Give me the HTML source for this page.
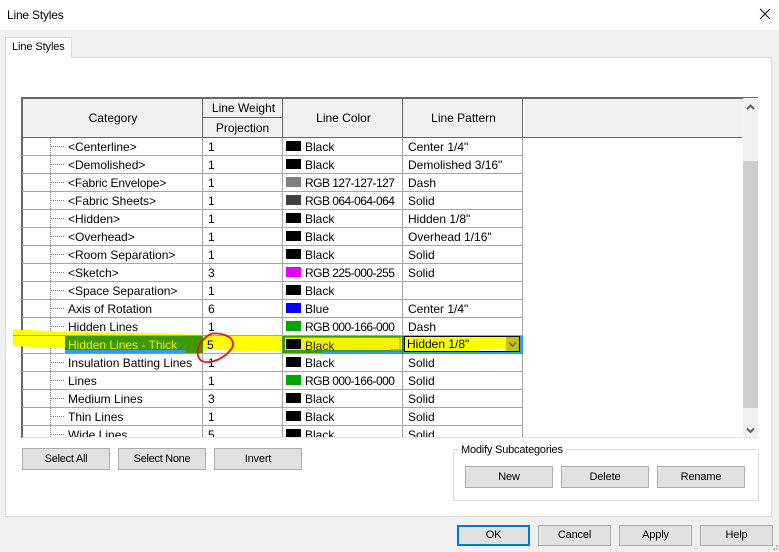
<!DOCTYPE html>
<html><head><meta charset="utf-8"><style>
html,body{margin:0;padding:0}
body{width:779px;height:552px;overflow:hidden;background:#f0f0f0;position:relative;font-family:"Liberation Sans",sans-serif;font-size:12px;color:#000}
div{position:absolute;box-sizing:border-box}
.t{white-space:nowrap;line-height:16px;height:16px}
.c{text-align:center}
.r{letter-spacing:-.53px}
.b{background:#e1e1e1;border:1px solid #adadad;text-align:center;line-height:20px;font-size:11px;letter-spacing:-.15px}
.h{background:#a6a6a6}
.d{background:#686868}
.s{width:15px;height:10px;left:286px}
</style></head><body>
<div style="left:0;top:0;width:779px;height:30px;background:#fff"></div>
<div class="t" style="left:7px;top:7px;font-size:12px;letter-spacing:-.2px">Line Styles</div>
<svg style="position:absolute;left:759px;top:8px" width="20" height="20"><path d="M1 1L11 11M11 1L1 11" stroke="#111" stroke-width="1" fill="none"/></svg>

<div style="left:5px;top:57px;width:767px;height:460px;background:#fff;border:1px solid #d9d9d9"></div>
<div style="left:5px;top:37px;width:67px;height:21px;background:#fff;border:1px solid #d9d9d9;border-bottom:0"></div>
<div class="t" style="left:12px;top:39px;font-size:11px;letter-spacing:-.1px">Line Styles</div>

<!-- table -->
<div style="left:22px;top:98px;width:721px;height:39px;background:#f0f0f0;border:1px solid #fff;border-bottom:0"></div>
<div style="left:523px;top:137px;width:220px;height:300px;background:#fff"></div>
<div class="d" style="left:21px;top:97px;width:737px;height:1.5px"></div>
<div class="d" style="left:21px;top:97px;width:1.5px;height:341px"></div>
<div class="d" style="left:22px;top:137px;width:720px;height:1px"></div>
<div class="d" style="left:202px;top:98px;width:1px;height:39px"></div>
<div class="d" style="left:282px;top:98px;width:1px;height:39px"></div>
<div class="d" style="left:402px;top:98px;width:1px;height:39px"></div>
<div class="d" style="left:522px;top:98px;width:1px;height:39px"></div>
<div style="left:523px;top:99px;width:1px;height:38px;background:#fff"></div>
<div class="d" style="left:203px;top:117px;width:79px;height:1px"></div>
<div style="left:22px;top:437px;width:736px;height:1px;background:#e3e3e3"></div>

<div class="t c" style="left:23px;top:110px;width:180px">Category</div>
<div class="t c" style="left:204px;top:100px;width:79px">Line Weight</div>
<div class="t c" style="left:203px;top:120px;width:79px">Projection</div>
<div class="t c" style="left:284px;top:110px;width:119px">Line Color</div>
<div class="t c" style="left:404px;top:110px;width:119px">Line Pattern</div>

<!-- grid -->
<div class="h" style="left:202px;top:138px;width:1px;height:299px"></div>
<div class="h" style="left:282px;top:138px;width:1px;height:299px"></div>
<div class="h" style="left:402px;top:138px;width:1px;height:299px"></div>
<div class="h" style="left:522px;top:138px;width:1px;height:299px"></div>
<div class="h" style="left:22px;top:155px;width:501px;height:1px"></div>
<div class="h" style="left:22px;top:173px;width:501px;height:1px"></div>
<div class="h" style="left:22px;top:191px;width:501px;height:1px"></div>
<div class="h" style="left:22px;top:209px;width:501px;height:1px"></div>
<div class="h" style="left:22px;top:227px;width:501px;height:1px"></div>
<div class="h" style="left:22px;top:245px;width:501px;height:1px"></div>
<div class="h" style="left:22px;top:263px;width:501px;height:1px"></div>
<div class="h" style="left:22px;top:281px;width:501px;height:1px"></div>
<div class="h" style="left:22px;top:299px;width:501px;height:1px"></div>
<div class="h" style="left:22px;top:317px;width:501px;height:1px"></div>
<div class="h" style="left:22px;top:335px;width:501px;height:1px"></div>
<div class="h" style="left:22px;top:353px;width:501px;height:1px"></div>
<div class="h" style="left:22px;top:371px;width:501px;height:1px"></div>
<div class="h" style="left:22px;top:389px;width:501px;height:1px"></div>
<div class="h" style="left:22px;top:407px;width:501px;height:1px"></div>
<div class="h" style="left:22px;top:425px;width:501px;height:1px"></div>

<!-- tree lines -->
<div style="left:50px;top:138px;width:0;height:299px;border-left:1px dotted #808080"></div>
<svg style="position:absolute;left:51px;top:138px" width="15" height="299"><path d="M0 8.500H14M0 26.500H14M0 44.500H14M0 62.500H14M0 80.500H14M0 98.500H14M0 116.500H14M0 134.500H14M0 152.500H14M0 170.500H14M0 188.500H14M0 206.500H14M0 224.500H14M0 242.500H14M0 260.500H14M0 278.500H14M0 296.500H14" stroke="#808080" stroke-dasharray="1 1" fill="none"/></svg>

<!-- rows: category -->
<div class="t" style="left:68px;top:139px">&lt;Centerline&gt;</div>
<div class="t" style="left:68px;top:157px">&lt;Demolished&gt;</div>
<div class="t" style="left:68px;top:175px;letter-spacing:-.15px">&lt;Fabric Envelope&gt;</div>
<div class="t" style="left:68px;top:193px">&lt;Fabric Sheets&gt;</div>
<div class="t" style="left:68px;top:211px">&lt;Hidden&gt;</div>
<div class="t" style="left:68px;top:229px">&lt;Overhead&gt;</div>
<div class="t" style="left:68px;top:247px">&lt;Room Separation&gt;</div>
<div class="t" style="left:68px;top:265px">&lt;Sketch&gt;</div>
<div class="t" style="left:68px;top:283px">&lt;Space Separation&gt;</div>
<div class="t" style="left:68px;top:301px">Axis of Rotation</div>
<div class="t" style="left:68px;top:319px">Hidden Lines</div>
<div class="t" style="left:68px;top:355px">Insulation Batting Lines</div>
<div class="t" style="left:68px;top:373px">Lines</div>
<div class="t" style="left:68px;top:391px">Medium Lines</div>
<div class="t" style="left:68px;top:409px">Thin Lines</div>
<div class="t" style="left:68px;top:427px;height:10px;overflow:hidden">Wide Lines</div>

<!-- rows: weight -->
<div class="t" style="left:208px;top:139px">1</div>
<div class="t" style="left:208px;top:157px">1</div>
<div class="t" style="left:208px;top:175px">1</div>
<div class="t" style="left:208px;top:193px">1</div>
<div class="t" style="left:208px;top:211px">1</div>
<div class="t" style="left:208px;top:229px">1</div>
<div class="t" style="left:208px;top:247px">1</div>
<div class="t" style="left:208px;top:265px">3</div>
<div class="t" style="left:208px;top:283px">1</div>
<div class="t" style="left:208px;top:301px">6</div>
<div class="t" style="left:208px;top:319px">1</div>
<div class="t" style="left:208px;top:355px">1</div>
<div class="t" style="left:208px;top:373px">1</div>
<div class="t" style="left:208px;top:391px">3</div>
<div class="t" style="left:208px;top:409px">1</div>
<div class="t" style="left:208px;top:427px;height:10px;overflow:hidden">5</div>

<!-- rows: color -->
<div class="s" style="top:141px;background:#000"></div><div class="t" style="left:305px;top:139px">Black</div>
<div class="s" style="top:159px;background:#000"></div><div class="t" style="left:305px;top:157px">Black</div>
<div class="s" style="top:177px;background:#7f7f7f"></div><div class="t r" style="left:305px;top:175px">RGB 127-127-127</div>
<div class="s" style="top:195px;background:#404040"></div><div class="t r" style="left:305px;top:193px">RGB 064-064-064</div>
<div class="s" style="top:213px;background:#000"></div><div class="t" style="left:305px;top:211px">Black</div>
<div class="s" style="top:231px;background:#000"></div><div class="t" style="left:305px;top:229px">Black</div>
<div class="s" style="top:249px;background:#000"></div><div class="t" style="left:305px;top:247px">Black</div>
<div class="s" style="top:267px;background:#e100ff"></div><div class="t r" style="left:305px;top:265px">RGB 225-000-255</div>
<div class="s" style="top:285px;background:#000"></div><div class="t" style="left:305px;top:283px">Black</div>
<div class="s" style="top:303px;background:#0000ff"></div><div class="t" style="left:305px;top:301px">Blue</div>
<div class="s" style="top:321px;background:#00a600"></div><div class="t r" style="left:305px;top:319px">RGB 000-166-000</div>
<div class="s" style="top:357px;background:#000"></div><div class="t" style="left:305px;top:355px">Black</div>
<div class="s" style="top:375px;background:#00a600"></div><div class="t r" style="left:305px;top:373px">RGB 000-166-000</div>
<div class="s" style="top:393px;background:#000"></div><div class="t" style="left:305px;top:391px">Black</div>
<div class="s" style="top:411px;background:#000"></div><div class="t" style="left:305px;top:409px">Black</div>
<div class="s" style="top:429px;height:8px;background:#000"></div><div class="t" style="left:305px;top:427px;height:10px;overflow:hidden">Black</div>

<!-- rows: pattern -->
<div class="t" style="left:408px;top:139px">Center 1/4"</div>
<div class="t" style="left:408px;top:157px">Demolished 3/16"</div>
<div class="t" style="left:408px;top:175px">Dash</div>
<div class="t" style="left:408px;top:193px">Solid</div>
<div class="t" style="left:408px;top:211px">Hidden 1/8"</div>
<div class="t" style="left:408px;top:229px">Overhead 1/16"</div>
<div class="t" style="left:408px;top:247px">Solid</div>
<div class="t" style="left:408px;top:265px">Solid</div>
<div class="t" style="left:408px;top:301px">Center 1/4"</div>
<div class="t" style="left:408px;top:319px">Dash</div>
<div class="t" style="left:408px;top:355px">Solid</div>
<div class="t" style="left:408px;top:373px">Solid</div>
<div class="t" style="left:408px;top:391px">Solid</div>
<div class="t" style="left:408px;top:409px">Solid</div>
<div class="t" style="left:408px;top:427px;height:10px;overflow:hidden">Solid</div>

<!-- highlighted row -->
<svg style="position:absolute;left:0;top:0" width="779" height="552">
<path d="M13 330H28L65 332L150 333L205 335H65V348L32 347L13 346Z" fill="#ffff00"/>
<path d="M13 335.500H65" stroke="#b0b000"/>
<rect x="65" y="336" width="138" height="17" fill="#3d9900"/>
<rect x="65" y="350" width="121" height="3.500" fill="#3399ff"/>
<rect x="203" y="336" width="80" height="17" fill="#fff"/>
<path d="M203 336H283V351L240 352L228 351V350H203Z" fill="#ffff00"/>
<rect x="282" y="336" width="240" height="17" fill="#3d9900"/>
<rect x="285" y="337" width="117" height="13" fill="#f3f300"/>
<path d="M285 337.500H400M400 337V350" stroke="#a8a800" fill="none"/>
<rect x="390" y="349" width="12" height="1.500" fill="#aaa"/>
<rect x="282" y="350" width="40" height="3" fill="#3d9900"/>
<rect x="322" y="351.500" width="201" height="2.500" fill="#3399ff"/>
<rect x="404.500" y="336.500" width="115" height="15" fill="#ffff00" stroke="#000"/>
<rect x="480" y="349" width="25" height="2" fill="#fff"/>
<rect x="506" y="337" width="13" height="14" fill="#c4c400"/>
<path d="M509 342.500L512.500 346L516 342.500" stroke="#444" fill="none"/>
<rect x="520" y="336" width="3" height="18" fill="#3399ff"/>
<rect x="402" y="336" width="1" height="18" fill="#2d7a00"/>
<rect x="286" y="339" width="15" height="10" fill="#000"/>
</svg>
<div class="t" style="left:68px;top:337px;color:#e6f000">Hidden Lines - Thick</div>
<div class="t" style="left:207px;top:337px">5</div>
<div class="t" style="left:305px;top:338px;color:#222">Black</div>
<div class="t" style="left:407px;top:336px">Hidden 1/8"</div>
<svg style="position:absolute;left:0;top:0" width="779" height="552"><path d="M212 333.500C218 333 224 334 229 337C233 340 234 344 232 348C229 353 224 357 217 360C212 362 206 363 202 361C198 359 197 354 198 349C199 344 204 337 212 333.500Z" stroke="#e8141c" stroke-width="1.800" fill="none" stroke-linejoin="round"/></svg>

<!-- scrollbar -->
<div style="left:743px;top:98px;width:15px;height:339px;background:#f0f0f0"></div>
<div style="left:743px;top:161px;width:15px;height:247px;background:#cdcdcd"></div>
<svg style="position:absolute;left:743px;top:98px" width="15" height="339"><path d="M4 11L7.500 7.500L11 11" stroke="#606060" stroke-width="2" fill="none"/><path d="M4 330.500L7.500 334L11 330.500" stroke="#606060" stroke-width="2" fill="none"/></svg>

<!-- buttons -->
<div class="b" style="left:22px;top:448px;width:88px;height:22px;letter-spacing:-.25px">Select All</div>
<div class="b" style="left:118px;top:448px;width:88px;height:22px;letter-spacing:-.3px">Select None</div>
<div class="b" style="left:214px;top:448px;width:88px;height:22px">Invert</div>

<div style="left:453px;top:449px;width:306px;height:52px;border:1px solid #dcdcdc"></div>
<div class="t" style="left:458px;top:442px;background:#fff;padding:0 3px;font-size:11px;letter-spacing:-.2px">Modify Subcategories</div>
<div class="b" style="left:465px;top:466px;width:88px;height:22px">New</div>
<div class="b" style="left:561px;top:466px;width:88px;height:22px">Delete</div>
<div class="b" style="left:657px;top:466px;width:88px;height:22px">Rename</div>

<div class="b" style="left:457px;top:525px;width:73px;height:21px;border:2px solid #0078d7;line-height:17px">OK</div>
<div class="b" style="left:538px;top:525px;width:73px;height:21px;line-height:19px">Cancel</div>
<div class="b" style="left:619px;top:525px;width:73px;height:21px;line-height:19px">Apply</div>
<div class="b" style="left:700px;top:525px;width:73px;height:21px;line-height:19px">Help</div>
<svg style="position:absolute;left:771px;top:544px" width="8" height="8"><path d="M5 1h2v2h-2zM2 4h2v2h-2zM5 4h2v2h-2z" fill="#bdbdbd"/></svg>
</body></html>
